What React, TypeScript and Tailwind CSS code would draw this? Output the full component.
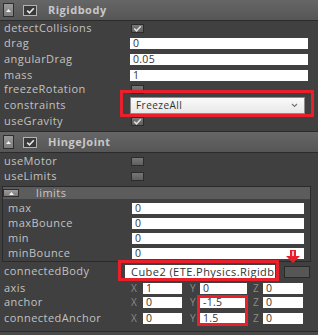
import React from "react";

function Tick({ color = "#d8d8d8" }: { color?: string }) {
  return (
    <svg width="9" height="7" viewBox="0 0 9 7" className="block">
      <path d="M1.2 3.6 L3.5 5.8 L7.8 1.2" fill="none" stroke={color} strokeWidth="1.6" />
    </svg>
  );
}

function Collapse({ cls }: { cls: string }) {
  return (
    <div className={`${cls} flex items-center justify-center bg-linear-to-b from-[#9a9a9a] to-[#7c7c7c] border border-[#2e2e2e]`}>
      <svg width="5" height="3" viewBox="0 0 5 3" className="block">
        <path d="M0 3 L2.5 0 L5 3 Z" fill="#f4f4f4" />
      </svg>
    </div>
  );
}

function Header({ title }: { title: string }) {
  return (
    <div className="h-[21px] flex items-center bg-linear-to-b from-[#666666] to-[#565656] border-b border-[#2b2b2b]">
      <Collapse cls="ml-[3px] w-[11px] h-[14px]" />
      <div className="ml-[9px] w-[14px] h-[11px] flex items-center justify-center bg-[#3a3a3a] border border-[#b4b4b4]">
        <Tick color="#e6e6e6" />
      </div>
      <span className="ml-[11px] font-bold text-[11px] text-[#c8c8c8] tracking-[0.5px]">{title}</span>
    </div>
  );
}

function Check({ on }: { on?: boolean }) {
  return (
    <div className="w-[13px] h-[9px] flex items-center justify-center bg-linear-to-b from-[#777777] to-[#5f5f5f] border border-[#2c2c2c]">
      {on ? <Tick color="#dcdcdc" /> : null}
    </div>
  );
}

function Field({ value, cls }: { value: string; cls: string }) {
  return (
    <div className={`${cls} h-[11px] flex items-center bg-white text-[#333333] text-[10.5px] leading-none pl-[3px] whitespace-nowrap tracking-[0.3px]`}>
      {value}
    </div>
  );
}

function Row({ h, label, lw = "w-[131px]", pl = "pl-[4px]", children }: { h: string; label: string; lw?: string; pl?: string; children?: React.ReactNode }) {
  return (
    <div className={`${h} flex items-center`}>
      <div className={`${lw} ${pl} shrink-0 whitespace-nowrap`}>{label}</div>
      {children}
    </div>
  );
}

function Vec({ h, label, x, y, z }: { h: string; label: string; x: string; y: string; z: string }) {
  return (
    <div className={`${h} flex items-center`}>
      <div className="w-[131px] pl-[4px] shrink-0 whitespace-nowrap">{label}</div>
      <span className="w-[12px] text-[#8a8a8a] text-[10px]">X</span>
      <Field value={x} cls="w-[39px]" />
      <span className="ml-[8px] w-[10px] text-[#8a8a8a] text-[10px]">Y</span>
      <Field value={y} cls="w-[47px]" />
      <span className="ml-[6px] w-[10px] text-[#8a8a8a] text-[10px]">Z</span>
      <Field value={z} cls="w-[40px]" />
    </div>
  );
}

export default function App() {
  return (
    <div className="relative w-[318px] h-[335px] overflow-hidden bg-[#4a4a4a] font-['Open_Sans',sans-serif] text-[11px] tracking-[0.45px] text-[#c2c2c2]">
      <div className="bg-[#404040] border-b border-[#2a2a2a] pb-[5px]">
        <Header title="Rigidbody" />
        <Row h="h-[14px]" label="detectCollisions"><Check on /></Row>
        <Row h="h-[16px]" label="drag"><Field value="0" cls="w-[178px] -ml-[1px]" /></Row>
        <Row h="h-[17px]" label="angularDrag"><Field value="0.05" cls="w-[178px] -ml-[1px]" /></Row>
        <Row h="h-[15px]" label="mass"><Field value="1" cls="w-[178px] -ml-[1px]" /></Row>
        <Row h="h-[13px]" label="freezeRotation"><Check /></Row>
        <Row h="h-[18px]" label="constraints">
          <div className="-ml-[1px] w-[175px] h-[17px] flex items-center justify-between bg-linear-to-b from-[#fafafa] to-[#e8e8e8] border border-[#8c8c8c] text-[#333333] text-[10px] pl-[5px] pr-[6px]">
            <span>FreezeAll</span>
            <svg width="7" height="5" viewBox="0 0 7 5" className="block">
              <path d="M1 1 L3.5 3.5 L6 1" fill="none" stroke="#777777" strokeWidth="1.2" />
            </svg>
          </div>
        </Row>
        <Row h="h-[14px]" label="useGravity"><Check on /></Row>
        <div className="mt-[3px] border-t border-[#2b2b2b]">
          <Header title="HingeJoint" />
        </div>
        <div className="mt-[1px]">
          <Row h="h-[15px]" label="useMotor"><Check /></Row>
          <Row h="h-[15px]" label="useLimits"><Check /></Row>
        </div>
        <div className="mt-[2px] ml-[2px] w-[309px] border border-[#2a2a2a]">
          <div className="h-[12px] flex items-center bg-[#5c5c5c]">
            <Collapse cls="ml-[0px] w-[16px] h-[8px]" />
            <span className="ml-[17px] text-[#c8c8c8]">limits</span>
          </div>
          <div className="pt-[2px]">
            <Row h="h-[15px]" label="max" lw="w-[129px]" pl="pl-[5px]"><Field value="0" cls="w-[172px]" /></Row>
            <Row h="h-[15px]" label="maxBounce" lw="w-[129px]" pl="pl-[5px]"><Field value="0" cls="w-[172px]" /></Row>
            <Row h="h-[15px]" label="min" lw="w-[129px]" pl="pl-[5px]"><Field value="0" cls="w-[172px]" /></Row>
            <Row h="h-[15px]" label="minBounce" lw="w-[129px]" pl="pl-[5px]"><Field value="0" cls="w-[172px]" /></Row>
          </div>
        </div>
        <div className="h-[19px] flex items-center">
          <div className="w-[125px] pl-[4px] shrink-0 whitespace-nowrap">connectedBody</div>
          <div className="w-[150px] h-[14px] flex items-center bg-white text-[#333333] text-[11px] leading-none pl-[6px] whitespace-nowrap">
            Cube2 (ETE.Physics.Rigidb
          </div>
          <div className="ml-[9px] w-[26px] h-[12px] bg-[#565656] border border-[#2a2a2a]" />
        </div>
        <Vec h="h-[14px]" label="axis" x="1" y="0" z="0" />
        <Vec h="h-[15px]" label="anchor" x="0" y="-1.5" z="0" />
        <Vec h="h-[16px]" label="connectedAnchor" x="0" y="1.5" z="0" />
      </div>

      {/* annotation overlays */}
      <div className="absolute left-[120px] top-[90px] w-[194px] h-[27px] border-[3px] border-[#e8202c]" />
      <div className="absolute left-[118px] top-[260px] w-[161px] h-[21px] border-[3px] border-[#e8202c]" />
      <div className="absolute left-[197px] top-[295px] w-[51px] h-[31px] border-[3px] border-[#e8202c]" />
      <svg className="absolute left-[286px] top-[250px]" width="14" height="13" viewBox="0 0 14 13">
        <path d="M4 0 H10 V6 H14 L7 13 L0 6 H4 Z" fill="#e8202c" />
        <rect x="6.3" y="1" width="1.4" height="5" fill="#ffffff" />
      </svg>
    </div>
  );
}
